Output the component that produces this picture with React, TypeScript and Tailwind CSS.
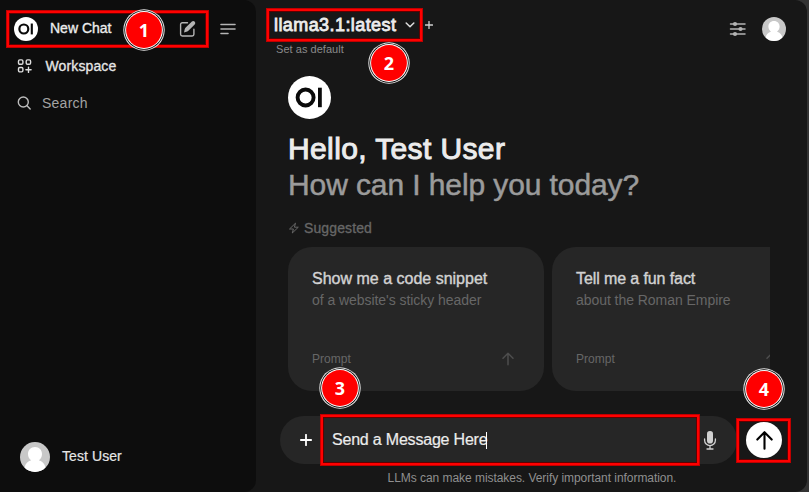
import React from "react";

function Logo({ className }: { className: string }) {
  return (
    <svg viewBox="0 0 43 43" className={className}>
      <circle cx="21.5" cy="21.5" r="21.5" fill="#fff" />
      <circle cx="17.6" cy="21.5" r="8" fill="none" stroke="#0a0a0a" strokeWidth="3.9" />
      <rect x="30" y="11.7" width="3.8" height="19.5" fill="#0a0a0a" />
    </svg>
  );
}

function Avatar({ className }: { className: string }) {
  return (
    <svg viewBox="0 0 30 30" className={className}>
      <defs>
        <clipPath id="avatar-clip">
          <circle cx="15" cy="15" r="15" />
        </clipPath>
      </defs>
      <g clipPath="url(#avatar-clip)">
        <rect width="30" height="30" fill="#c8c8c8" />
        <path d="M15 5c4.200 0 7 3 7 7 0 2.700-1.300 5-3.200 6.300 3.500.9 5.700 3.200 6.700 7.200V30h-21v-4.500c1-4 3.200-6.300 6.700-7.200C9.300 17 8 14.700 8 12c0-4 2.800-7 7-7z" fill="#fff" />
      </g>
    </svg>
  );
}

function UpArrow({ className, width }: { className: string; width: number }) {
  return (
    <svg viewBox="0 0 24 24" className={className} fill="none" stroke="currentColor" strokeWidth={width} strokeLinecap="round" strokeLinejoin="round">
      <path d="M12 20.500V3.500M4.500 11 12 3.500 19.500 11" />
    </svg>
  );
}

function Card({ title, text, titleClass }: { title: string; text: string; titleClass: string }) {
  return (
    <div className="flex h-36 w-64 shrink-0 flex-col rounded-3xl bg-[#262626] px-6 pt-5">
      <div className={`mt-[1px] text-base leading-[22px] text-[#d2d2d2] [-webkit-text-stroke:0.4px_#d2d2d2] ${titleClass}`}>{title}</div>
      <div className="text-sm leading-5 tracking-[-0.05px] text-[#676767]">{text}</div>
      <div className="mt-auto mb-[22px] flex items-center justify-between text-[#676767]">
        <span className="text-xs leading-5 tracking-[0.05px]">Prompt</span>
        <UpArrow className="mr-1 size-4 text-[#4e4e4e]" width={2.2} />
      </div>
    </div>
  );
}

function Badge({ n, className }: { n: string; className: string }) {
  return (
    <div className={`absolute flex size-[42px] items-center justify-center ${className}`}>
      <svg viewBox="0 0 42 42" className="absolute inset-0 size-full">
        <circle cx="21" cy="21" r="20.700" fill="#e8e8e8" />
        <circle cx="21" cy="21" r="19.700" fill="#000" />
        <circle cx="21" cy="21" r="18.900" fill="#fff" />
        <circle cx="21" cy="21" r="17.900" fill="#ff0000" />
      </svg>
      <span className="relative -top-[0.500px] font-['Noto_Sans',sans-serif] text-[18px] font-bold leading-none text-white">{n}</span>
    </div>
  );
}

function Frame({ className }: { className: string }) {
  return (
    <div className={`absolute border border-[#c00000] shadow-[inset_0_0_0_2px_#ff0000,inset_0_0_0_3px_#600000] ${className}`} />
  );
}

export default function App() {
  return (
    <div className="relative flex h-[492px] w-[809px] overflow-hidden bg-[#333] font-['Liberation_Sans',Arial,sans-serif]">
      <div className="flex w-[807px] overflow-hidden rounded-r-xl bg-[#171717]">
        <aside className="flex w-64 shrink-0 flex-col rounded-r-xl bg-[#0d0d0d] text-[#e6e6e6]">
          <div className="mt-[17px] flex h-6 items-center pl-[14px]">
            <Logo className="size-6" />
            <span className="mb-[2px] ml-3 w-[129px] text-sm leading-5 text-[#ececec] [-webkit-text-stroke:0.35px_#ececec]">New Chat</span>
            <svg viewBox="0 0 18 18" className="size-[18px] text-[#b4b4b4]" fill="none" stroke="currentColor" strokeWidth="1.400" strokeLinecap="round" strokeLinejoin="round">
              <path d="M8.500 2.700H3.300A1.700 1.700 0 0 0 1.600 4.400V14.300A1.700 1.700 0 0 0 3.300 16H13.200A1.700 1.700 0 0 0 14.900 14.300V9.300" />
              <path d="M5 12.600 5.700 9.200C6 8.400 6.500 7.800 7 7.300L12.900 1.600a1.900 1.900 0 0 1 2.700 0l.1.100a1.900 1.900 0 0 1 0 2.700L9.900 10.300C9.300 10.900 8.800 11.300 8.200 11.600z" fill="currentColor" stroke="none" />
            </svg>
            <svg viewBox="0 0 16 12" className="ml-[23px] h-3 w-4" fill="none" stroke="#b4b4b4" strokeWidth="1.600" strokeLinecap="round">
              <path d="M1 1.500h14M1 6h14M1 10.500h7" />
            </svg>
          </div>
          <div className="mt-[15px] flex h-5 items-center pl-[17px]">
            <svg viewBox="0 0 16 16" className="size-4" fill="none" stroke="#dedede" strokeWidth="1.400" strokeLinecap="round">
              <rect x="1.500" y="1.900" width="4.400" height="4.400" rx="1.300" />
              <rect x="9.200" y="1.900" width="4.400" height="4.400" rx="1.300" />
              <rect x="1.500" y="9.500" width="4.400" height="4.400" rx="1.300" />
              <path d="M11.500 9.200v5.200M8.900 11.800h5.200" />
            </svg>
            <span className="ml-[12.500px] text-sm leading-5 tracking-[0.12px] [-webkit-text-stroke:0.3px_#e6e6e6]">Workspace</span>
          </div>
          <div className="mt-[17px] flex h-5 items-center pl-[17px]">
            <svg viewBox="0 0 16 16" className="size-4" fill="none" stroke="#bcbcbc" strokeWidth="1.400" strokeLinecap="round">
              <circle cx="6.300" cy="7" r="5" />
              <path d="m10 10.700 3.200 3.400" />
            </svg>
            <span className="ml-[9px] text-sm leading-5 tracking-[0.250px] text-[#a3a3a3]">Search</span>
          </div>
          <div className="mt-auto mb-5 flex items-center pl-5">
            <Avatar className="size-[30px]" />
            <span className="mb-[2px] ml-3 text-sm leading-5 tracking-[0.080px] [-webkit-text-stroke:0.2px_#e6e6e6]">Test User</span>
          </div>
        </aside>

        <main className="flex min-w-0 grow flex-col">
          <header className="flex h-[58px] items-start pt-[13px] pl-[18px]">
            <div>
              <div className="flex h-6 items-center">
                <span className="w-[131px] whitespace-nowrap text-lg leading-6 tracking-[0.420px] text-[#ececec] [-webkit-text-stroke:0.8px_#ececec]">llama3.1:latest</span>
                <svg viewBox="0 0 10 6" className="h-[6px] w-[10px]" fill="none" stroke="#dedede" strokeWidth="1.500" strokeLinecap="round" strokeLinejoin="round">
                  <path d="M1.200 1 5 4.800 8.800 1" />
                </svg>
                <svg viewBox="0 0 8 8" className="ml-[10px] size-2" stroke="#d0d0d0" strokeWidth="1.300" strokeLinecap="round">
                  <path d="M4 .5v7M.5 4h7" />
                </svg>
              </div>
              <div className="ml-[2px] mt-1 text-[11px] leading-4 tracking-[0.040px] text-[#8a8a8a]">Set as default</div>
            </div>
            <div className="ml-auto mr-[21px] mt-[4px] flex items-center gap-[15px]">
              <svg viewBox="0 0 18 16" className="h-4 w-[18px]" stroke="#b4b4b4" strokeWidth="1.500" strokeLinecap="round">
                <path d="M1.500 3h14.500M1.500 8h14.500M1.500 13h14.500" />
                <g fill="#b4b4b4" stroke="none">
                  <circle cx="6" cy="3" r="2.100" />
                  <circle cx="11.500" cy="8" r="2.100" />
                  <circle cx="6" cy="13" r="2.100" />
                </g>
              </svg>
              <Avatar className="size-6" />
            </div>
          </header>

          <section className="ml-8 mt-[18px] w-[482px]">
            <Logo className="size-[43px]" />
            <h1 className="mt-3 text-[30px] leading-9 tracking-[0.380px] text-[#ececec] [-webkit-text-stroke:1px_#ececec]">Hello, Test User</h1>
            <p className="text-[30px] leading-9 tracking-[-0.100px] text-[#9b9b9b] [-webkit-text-stroke:0.5px_#9b9b9b]">How can I help you today?</p>
            <div className="mt-[15px] flex h-5 items-center gap-1 text-[#676767]">
              <svg viewBox="0 0 12 12" className="size-3" fill="none" stroke="currentColor" strokeWidth="1" strokeLinejoin="round">
                <path d="M7.500 1.200 1.500 7H5.400L4.300 11 10.300 5.200H6.400z" />
              </svg>
              <span className="text-sm leading-5 tracking-[0.120px] [-webkit-text-stroke:0.3px_#676767]">Suggested</span>
            </div>
            <div className="mt-[9px] flex gap-2 overflow-hidden">
              <Card title="Show me a code snippet" text="of a website's sticky header" titleClass="tracking-normal" />
              <Card title="Tell me a fun fact" text="about the Roman Empire" titleClass="tracking-[-0.100px]" />
            </div>
          </section>

          <div className="ml-6 mt-[25px] flex items-center gap-[9px]">
            <div className="flex h-12 w-[457px] items-center rounded-3xl bg-[#262626] pl-5">
              <svg viewBox="0 0 12 12" className="size-3" stroke="#fff" strokeWidth="1.800" strokeLinecap="round">
                <path d="M6 .8v10.400M.8 6h10.400" />
              </svg>
              <div className="ml-5 flex grow items-center">
                <span className="text-base leading-6 tracking-[-0.200px] text-[#ececec] [-webkit-text-stroke:0.2px_#ececec]">Send a Message Here</span>
                <span className="-ml-px h-[17px] w-px bg-white" />
              </div>
              <svg viewBox="0 0 14 20" className="mr-5 h-5 w-[14px]">
                <rect x="4" y="1" width="6" height="12.500" rx="2.800" fill="#d0d0d0" />
                <path d="M1.600 9v1.200a5.400 5.400 0 0 0 10.800 0V9M7 15.600V19M4 19h6" fill="none" stroke="#d0d0d0" strokeWidth="1.300" strokeLinecap="round" />
              </svg>
            </div>
            <div className="flex size-9 items-center justify-center rounded-full bg-white text-black">
              <UpArrow className="size-[23px]" width={2.2} />
            </div>
          </div>
          <div className="mt-[6px] text-center text-xs leading-4 tracking-[-0.050px] text-[#8f8f8f]">
            <span className="ml-[1px]">LLMs can make mistakes. Verify important information.</span>
          </div>
        </main>
      </div>

      <Frame className="left-[6px] top-[10px] h-[38px] w-[203px]" />
      <Frame className="left-[266px] top-[8px] h-[34px] w-[157px]" />
      <Frame className="left-[320px] top-[414px] h-[52px] w-[380px]" />
      <Frame className="left-[736px] top-[418px] h-[45px] w-[55px]" />
      <Badge n="1" className="left-[123px] top-[9px]" />
      <Badge n="2" className="left-[368px] top-[42px]" />
      <Badge n="3" className="left-[319px] top-[367px]" />
      <Badge n="4" className="left-[743px] top-[368px]" />
    </div>
  );
}
